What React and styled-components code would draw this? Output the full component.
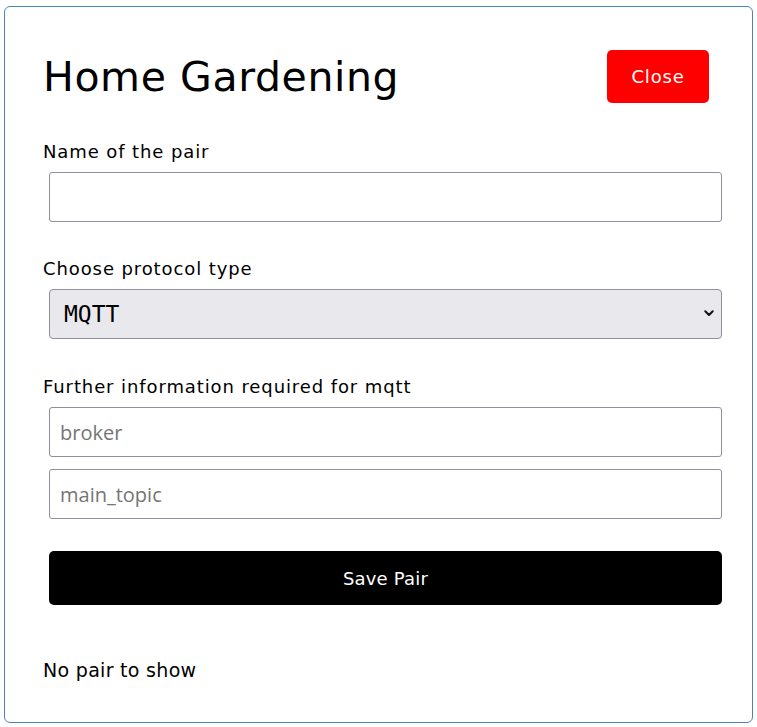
import React from "react";
import styled, { createGlobalStyle } from "styled-components";

const GlobalStyle = createGlobalStyle`
    html, body {
        margin: 0;
        padding: 0;
        background: #ffffff;
    }
    body {
        font-family: "DejaVu Sans", "Liberation Sans", sans-serif;
        color: #000;
    }
`;

const App = () => {
    return (<>
        <GlobalStyle />
        <Page>
            <Card>
                <Header>
                    <Title>Home Gardening</Title>
                    <CloseButton>Close</CloseButton>
                </Header>
                <Form>
                    <Label>Name of the pair</Label>
                    <TextInput type="text" />

                    <Label $gap="33px">Choose protocol type</Label>
                    <SelectWrap>
                        <Select defaultValue="mqtt">
                            <option value="mqtt">MQTT</option>
                            <option value="http">HTTP</option>
                        </Select>
                        <Chevron width="10" height="7" viewBox="0 0 10 7">
                            <path d="M1.3 1.3 L5 5 L8.7 1.3" fill="none" stroke="#111" strokeWidth="2" strokeLinecap="round" strokeLinejoin="round" />
                        </Chevron>
                    </SelectWrap>

                    <Label $gap="34px">Further information required for mqtt</Label>
                    <TextInput type="text" placeholder="broker" />
                    <TextInput type="text" placeholder="main_topic" $stacked />

                    <SaveButton type="button">Save Pair</SaveButton>
                </Form>
                <Empty>No pair to show</Empty>
            </Card>
        </Page>
    </>);
};

export default App;

const Page = styled.div`
    padding: 6px 4px 4px 4px;
`;

const Card = styled.div`
    border: 1px solid #4a84c0;
    border-radius: 6px;
    padding: 43px 30px 34px 38px;
    min-height: 717px;
    box-sizing: border-box;
`;

const Header = styled.div`
    display: flex;
    align-items: center;
    justify-content: space-between;
`;

const Title = styled.h1`
    margin: 0;
    padding-top: 2px;
    font-size: 41px;
    font-weight: 400;
    letter-spacing: 0.6px;
    line-height: 51px;
`;

const CloseButton = styled.button`
    width: 102px;
    height: 53px;
    margin-right: 13px;
    background: #ff0000;
    color: #ffffff;
    border: none;
    border-radius: 5px;
    font-family: "DejaVu Sans", sans-serif;
    font-size: 18px;
    letter-spacing: 0.8px;
    cursor: pointer;
`;

const Form = styled.div`
    display: flex;
    flex-direction: column;
    margin-top: 35px;
`;

const Label = styled.label`
    display: block;
    font-size: 18px;
    line-height: 27px;
    letter-spacing: 0.9px;
    margin-top: ${p => p.$gap || "0"};
    margin-bottom: 7px;
`;

const TextInput = styled.input`
    box-sizing: border-box;
    margin: ${p => p.$stacked ? "12px" : "0"} 0 0 6px;
    width: calc(100% - 6px);
    height: 50px;
    padding: 0 10px;
    border: 1px solid #8f8f9d;
    border-radius: 3px;
    background: #fff;
    font-family: "Open Sans", "Noto Sans", sans-serif;
    font-size: 20px;
    color: #000;
    outline: none;
    &::placeholder {
        color: #757575;
    }
`;

const SelectWrap = styled.div`
    position: relative;
    margin-left: 6px;
`;

const Select = styled.select`
    box-sizing: border-box;
    width: 100%;
    height: 50px;
    padding: 0 14px;
    appearance: none;
    border: 1px solid #8f8f9d;
    border-radius: 4px;
    background: #e9e9ed;
    font-family: "DejaVu Sans Mono", "Liberation Mono", monospace;
    font-size: 23px;
    color: #000;
    outline: none;
`;

const Chevron = styled.svg`
    position: absolute;
    right: 8px;
    top: 21px;
    pointer-events: none;
`;

const SaveButton = styled.button`
    margin: 32px 0 0 6px;
    height: 54px;
    background: #000;
    color: #fff;
    border: none;
    border-radius: 5px;
    font-family: "DejaVu Sans", sans-serif;
    font-size: 18px;
    letter-spacing: 0.2px;
    cursor: pointer;
`;

const Empty = styled.p`
    margin: 51px 0 0 0;
    font-size: 19px;
    line-height: 28px;
    letter-spacing: 0.3px;
`;
